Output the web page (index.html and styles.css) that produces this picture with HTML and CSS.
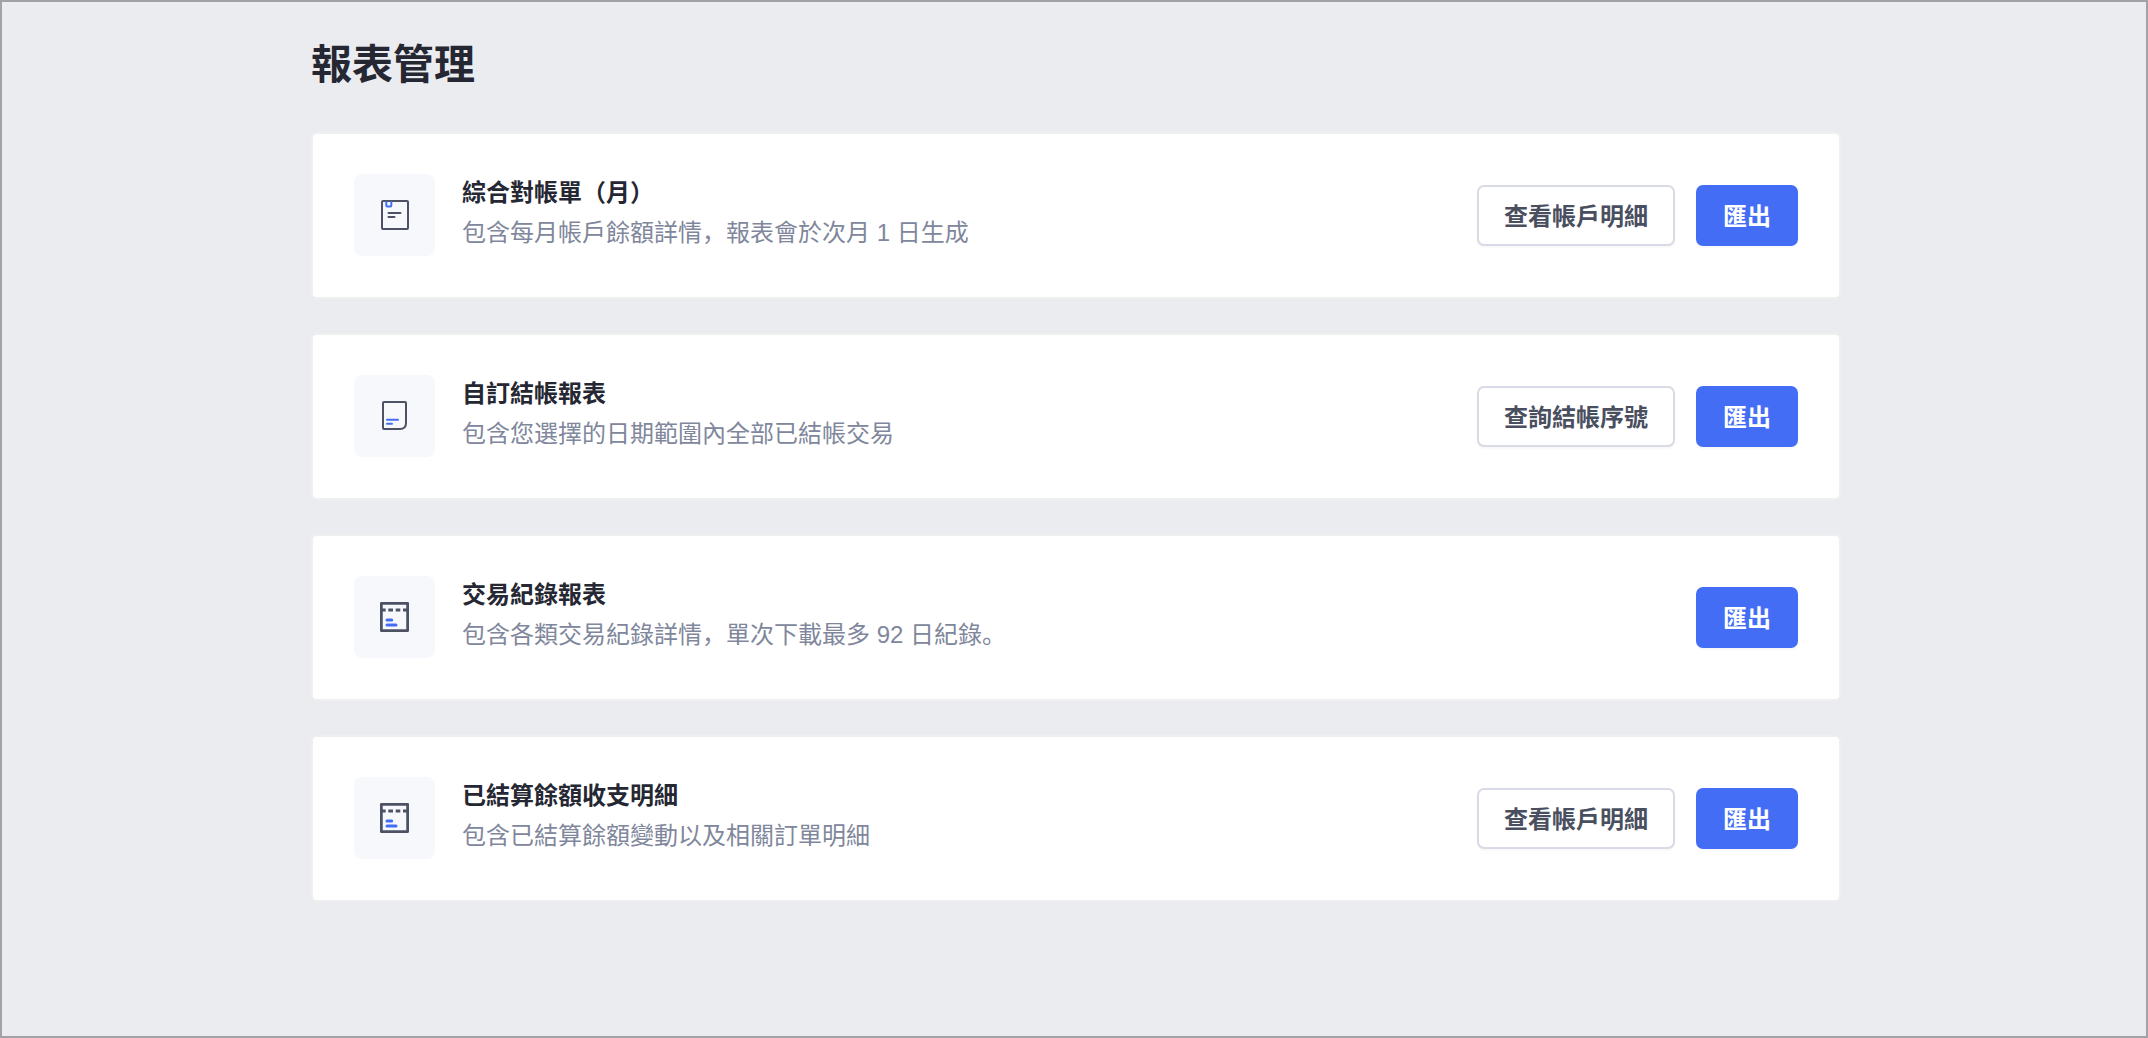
FILE: index.html
```html
<!DOCTYPE html>
<html lang="zh-Hans">
<head>
<meta charset="utf-8">
<meta name="viewport" content="width=device-width, initial-scale=1">
<title>報表管理</title>
<link rel="stylesheet" href="styles.css">
</head>
<body>
<main class="page">
<h1 class="title">報表管理</h1>
<ul class="reports">
<li class="card">
<div class="icon"><svg viewBox="0 0 28 30" width="28" height="30" aria-hidden="true"><rect x="1" y="1" width="26" height="28" rx="1"/><path class="accent" d="M5.3 2v3.6q0 .9.9.9h3.2q.9 0 .9-.9V2"/><path d="M7.5 13h12M7.5 17h6"/></svg></div>
<div class="info"><h2 class="name">綜合對帳單（月）</h2><p class="desc">包含每月帳戶餘額詳情，報表會於次月 1 日生成</p></div>
<div class="actions"><button class="btn" type="button">查看帳戶明細</button><button class="btn primary" type="button">匯出</button></div>
</li>
<li class="card">
<div class="icon"><svg viewBox="0 0 26 30" width="26" height="30" aria-hidden="true"><path d="M2 1h21q1 0 1 1v20q0 6-6 6H2q-1 0-1-1V2q0-1 1-1z"/><path class="accent" d="M5 18.7h11M5 22.7h5"/></svg></div>
<div class="info"><h2 class="name">自訂結帳報表</h2><p class="desc">包含您選擇的日期範圍內全部已結帳交易</p></div>
<div class="actions"><button class="btn" type="button">查詢結帳序號</button><button class="btn primary" type="button">匯出</button></div>
</li>
<li class="card">
<div class="icon"><svg viewBox="0 0 29 30" width="29" height="30" aria-hidden="true"><rect class="frame" x="1.25" y="1.25" width="26.5" height="27.5" rx="1"/><path class="dashes" d="M1 8h4.7M8.3 8H13M15.7 8h4.6M23 8h5"/><path class="accent" d="M7 18h4.7M7 23h9"/></svg></div>
<div class="info"><h2 class="name">交易紀錄報表</h2><p class="desc">包含各類交易紀錄詳情，單次下載最多 92 日紀錄。</p></div>
<div class="actions"><button class="btn primary" type="button">匯出</button></div>
</li>
<li class="card">
<div class="icon"><svg viewBox="0 0 29 30" width="29" height="30" aria-hidden="true"><rect class="frame" x="1.25" y="1.25" width="26.5" height="27.5" rx="1"/><path class="dashes" d="M1 8h4.7M8.3 8H13M15.7 8h4.6M23 8h5"/><path class="accent" d="M7 18h4.7M7 23h9"/></svg></div>
<div class="info"><h2 class="name">已結算餘額收支明細</h2><p class="desc">包含已結算餘額變動以及相關訂單明細</p></div>
<div class="actions"><button class="btn" type="button">查看帳戶明細</button><button class="btn primary" type="button">匯出</button></div>
</li>
</ul>
</main>
</body>
</html>
```
FILE: styles.css
```css
* { box-sizing: border-box; }
body {
  margin: 0;
  min-height: 100vh;
  padding-left: 4px;
  border: 2px solid #a2a2a6;
  background: #ebecf0;
  color: #252733;
  font-family: "Liberation Sans", "Noto Sans CJK SC", sans-serif;
}
.page { max-width: 1530px; margin: 0 auto; padding: 32px 0; }
.title { margin: 0 0 36px; font-size: 41px; line-height: 62px; }
.reports { display: grid; gap: 34px; margin: 0; padding: 0; list-style: none; }
.card { display: flex; align-items: center; padding: 40px 41px 41px; background: #fff; border: 2px solid #efeff0; border-radius: 6px; }
.icon { display: grid; place-items: center; width: 81px; height: 82px; border-radius: 8px; background: #f7f8fc; }
.icon svg { fill: none; stroke: #4c5263; stroke-width: 2; stroke-linecap: round; }
.icon .accent { stroke: #446df6; }
.icon .frame { stroke-width: 3; }
.icon .frame ~ .accent { stroke-width: 3; }
.icon .dashes { stroke-width: 3; stroke-linecap: butt; }
.info { flex: 1; align-self: flex-start; margin-left: 27px; }
.name { margin: 0; font-size: 24px; font-weight: 700; line-height: 38px; }
.desc { margin: 2px 0 0; font-size: 24px; line-height: 38px; color: #80879c; }
.actions { display: flex; gap: 21px; }
.btn { height: 61px; padding: 0 25px 2px; border: 2px solid #d8dae6; border-radius: 7px; background: #fff; box-shadow: 0 2px 2px #00000008; color: #4a4f5f; font: inherit; font-size: 24px; font-weight: 700; }
.primary { border-color: #446df6; background: #446df6; color: #fff; }
```
